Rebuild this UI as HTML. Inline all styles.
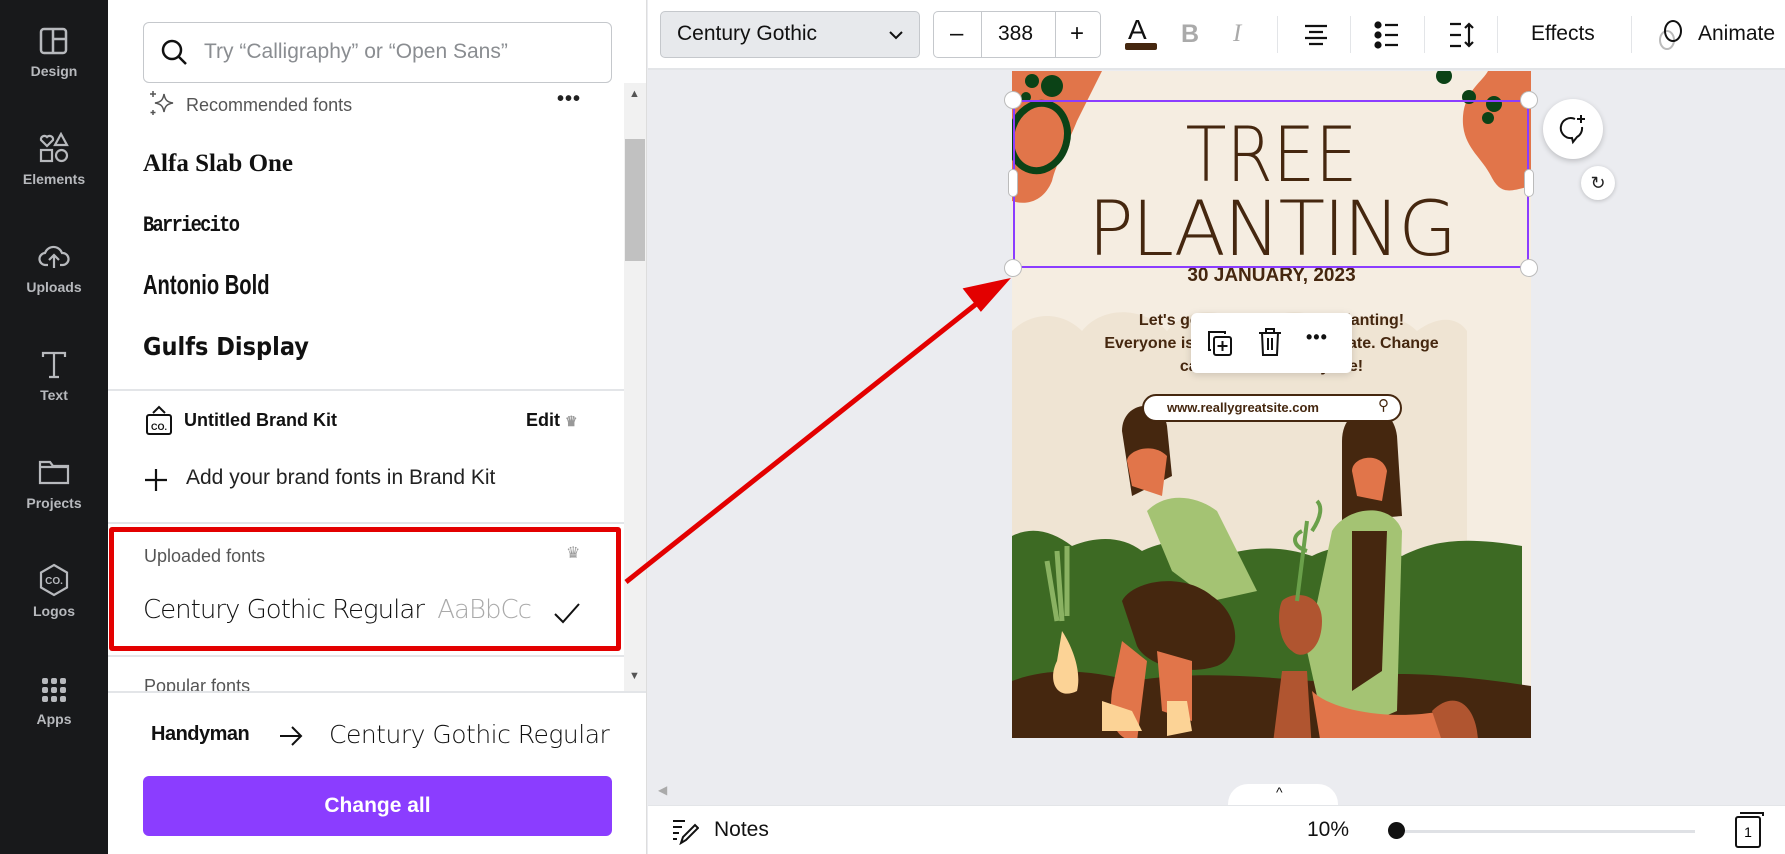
<!DOCTYPE html>
<html><head><meta charset="utf-8"><style>
*{box-sizing:border-box;margin:0;padding:0}
body{width:1785px;height:854px;overflow:hidden;font-family:"Liberation Sans",sans-serif;background:#ebecf0;position:relative}
.abs{position:absolute}
#side{left:0;top:0;width:108px;height:854px;background:#18191b}
.si{position:absolute;left:0;width:108px;text-align:center;color:#b7b9bd;font-size:14px;font-weight:bold}
#panel{left:108px;top:0;width:539px;height:854px;background:#fff;border-right:1px solid #ddd}
.t{position:absolute;white-space:nowrap}
.div{position:absolute;left:0;width:516px;height:2px;background:#e3e5e8}
</style></head><body>
<div class="abs" id="side">
 <svg class="abs" style="left:38px;top:27px" width="32" height="28" viewBox="0 0 32 28" fill="none" stroke="#b7b9bd" stroke-width="2.5"><rect x="3" y="2" width="25" height="24" rx="3"/><path d="M15 2v24M15 12h13"/></svg>
 <div class="si" style="top:63px">Design</div>
 <svg class="abs" style="left:38px;top:132px" width="32" height="32" viewBox="0 0 32 32" fill="none" stroke="#b7b9bd" stroke-width="2.2"><path d="M9 14l-6-6a3.5 3.5 0 016-3 3.5 3.5 0 016 3z"/><path d="M23 2l6 11h-12z"/><rect x="3" y="18" width="11" height="11"/><circle cx="23.5" cy="23.5" r="5.5"/></svg>
 <div class="si" style="top:171px">Elements</div>
 <svg class="abs" style="left:38px;top:240px" width="32" height="32" viewBox="0 0 32 32" fill="none" stroke="#b7b9bd" stroke-width="2.2"><path d="M10 25H8a6 6 0 01-1-12 9 9 0 0117 0 6 6 0 011 12h-3"/><path d="M16 28V15M11 20l5-5 5 5"/></svg>
 <div class="si" style="top:279px">Uploads</div>
 <svg class="abs" style="left:40px;top:350px" width="28" height="30" viewBox="0 0 28 30" fill="none" stroke="#b7b9bd" stroke-width="2.2"><path d="M3 7V3h22v4M14 3v24M9 27h10"/></svg>
 <div class="si" style="top:387px">Text</div>
 <svg class="abs" style="left:37px;top:458px" width="34" height="28" viewBox="0 0 34 28" fill="none" stroke="#b7b9bd" stroke-width="2.2"><path d="M3 4h10l3 4h15v17H3z M3 9h28"/></svg>
 <div class="si" style="top:495px">Projects</div>
 <svg class="abs" style="left:38px;top:563px" width="32" height="34" viewBox="0 0 32 34" fill="none" stroke="#b7b9bd" stroke-width="2.2"><path d="M16 2l13 7.5v15L16 32 3 24.5v-15z"/><text x="16" y="21" font-size="10" text-anchor="middle" fill="#b7b9bd" stroke="none" font-weight="bold" font-family="Liberation Sans">CO.</text></svg>
 <div class="si" style="top:603px">Logos</div>
 <svg class="abs" style="left:40px;top:676px" width="28" height="28" viewBox="0 0 28 28" fill="#b7b9bd"><rect x="2" y="2" width="6" height="6" rx="2"/><rect x="11" y="2" width="6" height="6" rx="2"/><rect x="20" y="2" width="6" height="6" rx="2"/><rect x="2" y="11" width="6" height="6" rx="2"/><rect x="11" y="11" width="6" height="6" rx="2"/><rect x="20" y="11" width="6" height="6" rx="2"/><rect x="2" y="20" width="6" height="6" rx="2"/><rect x="11" y="20" width="6" height="6" rx="2"/><rect x="20" y="20" width="6" height="6" rx="2"/></svg>
 <div class="si" style="top:711px">Apps</div>
</div>

<div class="abs" id="panel">
 <div class="abs" style="left:35px;top:22px;width:469px;height:61px;border:1.5px solid #c5c8cc;border-radius:6px"></div>
 <svg class="abs" style="left:52px;top:38px" width="30" height="30" viewBox="0 0 30 30" fill="none" stroke="#111" stroke-width="2.5"><circle cx="12" cy="12" r="9"/><path d="M19 19l7 7"/></svg>
 <div class="t" style="left:96px;top:40px;font-size:21px;color:#8a8d91">Try “Calligraphy” or “Open Sans”</div>
 <svg class="abs" style="left:38px;top:88px" width="30" height="30" viewBox="0 0 30 30" fill="none" stroke="#555" stroke-width="1.5"><path d="M18 6c1 6 3 8 9 9-6 1-8 3-9 9-1-6-3-8-9-9 6-1 8-3 9-9z"/><path d="M7 3v6M4 6h6M7 22v5M4.5 24.5h5"/></svg>
 <div class="t" style="left:78px;top:95px;font-size:18px;color:#555">Recommended fonts</div>
 <div class="t" style="left:449px;top:88px;font-size:20px;color:#222;font-weight:bold;letter-spacing:1px">•••</div>
 <div class="t" style="left:35px;top:150px;font-size:25px;font-weight:900;font-family:'Liberation Serif',serif;color:#111">Alfa Slab One</div>
 <div class="t" style="left:35px;top:213px;font-size:22px;color:#111;font-family:'Liberation Mono',monospace;letter-spacing:-2px;font-weight:bold;transform:scaleX(.85);transform-origin:left">Barriecito</div>
 <div class="t" style="left:35px;top:269px;font-size:28px;color:#111;font-weight:bold;transform:scaleX(.72);transform-origin:left">Antonio Bold</div>
 <div class="t" style="left:35px;top:332px;font-size:25px;color:#111;font-weight:900;font-family:'DejaVu Sans',sans-serif;transform:scaleX(.9);transform-origin:left">Gulfs Display</div>
 <div class="div" style="top:389px"></div>
 <svg class="abs" style="left:37px;top:404px" width="28" height="32" viewBox="0 0 28 32" fill="none" stroke="#111" stroke-width="2"><path d="M8 9l6-6 6 6"/><rect x="2" y="11" width="24" height="19" rx="2"/><text x="14" y="26" font-size="9" text-anchor="middle" fill="#111" stroke="none" font-weight="bold" font-family="Liberation Sans">CO.</text></svg>
 <div class="t" style="left:76px;top:410px;font-size:18px;font-weight:bold;color:#111">Untitled Brand Kit</div>
 <div class="t" style="left:418px;top:410px;font-size:18px;font-weight:bold;color:#111">Edit <span style="color:#999;font-size:14px">♛</span></div>
 <svg class="abs" style="left:36px;top:468px" width="24" height="24" viewBox="0 0 24 24" stroke="#111" stroke-width="2.2"><path d="M12 1v22M1 12h22"/></svg>
 <div class="t" style="left:78px;top:466px;font-size:21px;color:#222">Add your brand fonts in Brand Kit</div>
 <div class="div" style="top:522px"></div>
 <div class="t" style="left:36px;top:546px;font-size:18px;color:#555">Uploaded fonts</div>
 <div class="t" style="left:458px;top:543px;font-size:16px;color:#999">♛</div>
 <div class="t" style="left:35px;top:595px;font-size:26px;color:#111;font-family:'DejaVu Sans',sans-serif;letter-spacing:-1px;font-weight:300">Century Gothic Regular <span style="color:#aaa;margin-left:6px">AaBbCc</span></div>
 <svg class="abs" style="left:445px;top:601px" width="28" height="24" viewBox="0 0 28 24" fill="none" stroke="#111" stroke-width="2"><path d="M2 13l8 8L26 3"/></svg>
 <div class="abs" style="left:1px;top:527px;width:512px;height:124px;border:5.5px solid #e30000;border-radius:3px"></div>
 <div class="div" style="top:655px"></div>
 <div class="t" style="left:36px;top:676px;font-size:18px;color:#555;height:16px;overflow:hidden">Popular fonts</div>
 <div class="abs" style="left:516px;top:83px;width:22px;height:608px;background:#f1f1f1"></div>
 <div class="abs" style="left:517px;top:139px;width:20px;height:122px;background:#c1c1c1"></div>
 <div class="t" style="left:521px;top:88px;font-size:11px;color:#555">▲</div>
 <div class="t" style="left:521px;top:670px;font-size:11px;color:#555">▼</div>
 <div class="abs" style="left:0;top:691px;width:538px;height:2px;background:#e3e5e8"></div>
 <div class="t" style="left:43px;top:723px;font-size:20px;font-weight:bold;color:#111;letter-spacing:-0.5px">Handyman</div>
 <svg class="abs" style="left:170px;top:725px" width="26" height="22" viewBox="0 0 26 22" fill="none" stroke="#111" stroke-width="2"><path d="M2 11h21M14 2l9 9-9 9"/></svg>
 <div class="t" style="left:221px;top:720px;font-size:25px;color:#111;font-family:'DejaVu Sans',sans-serif;letter-spacing:-0.5px;font-weight:300">Century Gothic Regular</div>
 <div class="abs" style="left:35px;top:776px;width:469px;height:60px;background:#8b3dff;border-radius:6px;color:#fff;font-size:21px;font-weight:bold;text-align:center;line-height:60px">Change all</div>
</div>

<!-- toolbar -->
<div class="abs" style="left:648px;top:0;width:1137px;height:70px;background:#fff;border-bottom:2px solid #e3e5e8"></div>
<div class="abs" style="left:660px;top:11px;width:260px;height:47px;background:#e7e9ec;border:1.5px solid #c5c8cc;border-radius:5px"></div>
<div class="t" style="left:677px;top:22px;font-size:21px;color:#111">Century Gothic</div>
<svg class="abs" style="left:888px;top:29px" width="16" height="12" viewBox="0 0 16 12" fill="none" stroke="#111" stroke-width="2"><path d="M2 3l6 6 6-6"/></svg>
<div class="abs" style="left:933px;top:11px;width:168px;height:47px;border:1.5px solid #c5c8cc;border-radius:5px"></div>
<div class="abs" style="left:981px;top:12px;width:1px;height:45px;background:#c5c8cc"></div>
<div class="abs" style="left:1055px;top:12px;width:1px;height:45px;background:#c5c8cc"></div>
<div class="t" style="left:950px;top:20px;font-size:24px;color:#111">–</div>
<div class="t" style="left:998px;top:22px;font-size:21px;color:#111">388</div>
<div class="t" style="left:1070px;top:20px;font-size:24px;color:#111">+</div>
<div class="t" style="left:1128px;top:14px;font-size:28px;color:#111">A</div>
<div class="abs" style="left:1125px;top:43px;width:32px;height:7px;background:#45270f;border-radius:2px"></div>
<div class="t" style="left:1181px;top:20px;font-size:25px;color:#aaa;font-weight:bold">B</div>
<div class="t" style="left:1233px;top:20px;font-size:25px;color:#aaa;font-style:italic;font-family:'Liberation Serif',serif">I</div>
<div class="abs" style="left:1277px;top:16px;width:1px;height:37px;background:#e3e5e8"></div>
<svg class="abs" style="left:1303px;top:23px" width="26" height="24" viewBox="0 0 26 24" stroke="#111" stroke-width="2.2"><path d="M2 3h22M6 9h14M2 15h22M6 21h14"/></svg>
<div class="abs" style="left:1350px;top:16px;width:1px;height:37px;background:#e3e5e8"></div>
<svg class="abs" style="left:1374px;top:21px" width="26" height="28" viewBox="0 0 26 28" fill="#111" stroke="#111" stroke-width="2.2"><circle cx="4" cy="4" r="2.5"/><circle cx="4" cy="14" r="2.5"/><circle cx="4" cy="24" r="2.5"/><path d="M11 4h13M11 14h13M11 24h13"/></svg>
<div class="abs" style="left:1424px;top:16px;width:1px;height:37px;background:#e3e5e8"></div>
<svg class="abs" style="left:1448px;top:21px" width="28" height="28" viewBox="0 0 28 28" fill="none" stroke="#111" stroke-width="2.2"><path d="M2 3h11M2 14h11M2 25h11M21 3v22M17 7l4-4 4 4M17 21l4 4 4-4"/></svg>
<div class="abs" style="left:1497px;top:16px;width:1px;height:37px;background:#e3e5e8"></div>
<div class="t" style="left:1531px;top:22px;font-size:21px;color:#111">Effects</div>
<div class="abs" style="left:1631px;top:16px;width:1px;height:37px;background:#e3e5e8"></div>
<svg class="abs" style="left:1656px;top:18px" width="28" height="34" viewBox="0 0 28 34" fill="none" stroke-width="2"><ellipse cx="11" cy="22" rx="7" ry="9" stroke="#bbb"/><ellipse cx="17" cy="13" rx="8" ry="10" stroke="#111"/></svg>
<div class="t" style="left:1698px;top:22px;font-size:21px;color:#111">Animate</div>

<!-- page -->
<div class="abs" style="left:1012px;top:71px;width:519px;height:667px;background:#f5ede1;overflow:hidden">
 <svg width="519" height="667" viewBox="0 0 519 667">
  <rect width="519" height="667" fill="#f5ede1"/>
  <path d="M0 0h90l-25 50c-10 25-20 40-25 60-8 20-25 25-40 20z" fill="#e1754a"/>
  <circle cx="20" cy="10" r="7" fill="#0b4216"/><circle cx="40" cy="15" r="11" fill="#0b4216"/><circle cx="14" cy="26" r="5" fill="#0b4216"/>
  <ellipse cx="27" cy="66" rx="28" ry="34" fill="none" stroke="#0b4216" stroke-width="7" transform="rotate(15 27 66)"/>
  <path d="M519 0v115c-20 5-30 10-40-10-10-20-30-30-28-60 2-25 20-35 25-45z" fill="#e1754a"/>
  <circle cx="457" cy="26" r="7" fill="#0b4216"/><circle cx="482" cy="33" r="8" fill="#0b4216"/><circle cx="476" cy="47" r="6" fill="#0b4216"/><circle cx="432" cy="5" r="8" fill="#0b4216"/>
  <path d="M0 260c20-20 50-20 70 0 20-25 60-25 85 0 20-25 60-25 85 0 25-25 60-25 85 0 25-20 60-20 80 0 20-15 40-15 50 0v407H0z" fill="#efe4d3"/>
  <g transform="translate(0,95)">
  <path d="M0 370c20-10 40-5 60 10 25-10 50-10 70 5 30-15 60-10 80 5 30-10 60-10 90 0 30-15 60-10 90 0 30-15 60-20 120-10v297H0z" fill="#3d6a23"/>
  </g>
  <path d="M0 610c40-15 80-10 120 0 60-10 120-5 180 0 60-10 120-10 219 5v52H0z" fill="#45270f"/>
  <g transform="translate(0,100)">
  <path d="M110 260c0-30 40-35 45-5l5 50-40 20z" fill="#45270f"/>
  <path d="M115 290c0-10 25-20 40-5l-5 40-30-10z" fill="#e1754a"/>
  <path d="M135 340c20-20 50-15 70 0l40 80-45 10-40-30z" fill="#a4c373"/>
  <path d="M110 430c10-20 60-30 90-5 30 20 30 60 5 70-30 10-70 0-80-20z" fill="#45270f"/>
  <path d="M110 470l-10 50c-5 40 10 50 25 50l10-80z" fill="#e1754a"/>
  <path d="M145 480l5 60 30 10 0-60z" fill="#e1754a"/>
  <path d="M90 530l30 10 10 20-40 0z M155 530h20l5 30-25 5z" fill="#fcd396"/>
  <path d="M50 460c10 15 20 40 15 60-20 10-30-10-20-30z" fill="#fcd396"/>
  <path d="M45 380l5 70M35 390l10 60M55 375l0 70" stroke="#8ab262" stroke-width="5"/>
  <path d="M330 270c0-40 50-45 55-5l5 80-60 5z" fill="#45270f"/>
  <path d="M340 300c0-15 30-20 35 0l-5 30-25-5z" fill="#e1754a"/>
  <path d="M320 360c15-25 60-30 70 0l-5 180-70 30-20-90z" fill="#a4c373"/>
  <path d="M340 360l35 0-5 140-30 20z" fill="#45270f"/>
  <path d="M270 430c10-10 40-10 40 20 0 30-20 40-30 30-15-10-15-40-10-50z" fill="#b05530"/>
  <path d="M270 500h25l5 80h-40z" fill="#b05530"/>
  <path d="M300 520c20 20 80 30 130 20l20 40c-40 20-120 20-140 0z" fill="#e1754a"/>
  <path d="M420 540c20-20 40-10 45 20l5 40-30 0z" fill="#b05530"/>
  <path d="M285 430l10-80M295 380c-15-5-15-15-5-20M300 360c10-15 10-25 5-30" stroke="#6aa04a" stroke-width="4" fill="none"/>
  </g>
 </svg>
 <div class="t" style="left:0;width:519px;text-align:center;top:44px;font-size:76px;line-height:80px;color:#45270f;font-family:'DejaVu Sans',sans-serif;font-weight:200;transform:scaleX(.88)">TREE</div>
 <div class="t" style="left:0;width:519px;text-align:center;top:118px;font-size:76px;line-height:80px;color:#45270f;font-family:'DejaVu Sans',sans-serif;font-weight:200;letter-spacing:-2px">PLANTING</div>
 <div class="t" style="left:0;width:519px;text-align:center;top:194px;font-size:19px;font-weight:bold;color:#45270f">30 JANUARY, 2023</div>
 <div class="t" style="left:0;width:519px;text-align:center;top:238px;font-size:16px;line-height:23px;font-weight:bold;color:#45270f">Let's get together for tree planting!<br>Everyone is welcome to participate. Change<br>can start with everyone!</div>
 <div class="abs" style="left:130px;top:323px;width:260px;height:28px;border:2px solid #45270f;border-radius:14px;background:#fff"></div>
 <div class="t" style="left:155px;top:329px;font-size:13px;font-weight:bold;color:#45270f">www.reallygreatsite.com</div>
 <div class="t" style="left:366px;top:325px;font-size:15px;color:#45270f">⚲</div>
</div>
<!-- selection -->
<div class="abs" style="left:1013px;top:100px;width:516px;height:168px;border:2.5px solid #8b3dff"></div>
<div class="abs" style="left:1004px;top:91px;width:18px;height:18px;border-radius:50%;background:#fff;border:1px solid #bbb"></div>
<div class="abs" style="left:1520px;top:91px;width:18px;height:18px;border-radius:50%;background:#fff;border:1px solid #bbb"></div>
<div class="abs" style="left:1004px;top:259px;width:18px;height:18px;border-radius:50%;background:#fff;border:1px solid #bbb"></div>
<div class="abs" style="left:1520px;top:259px;width:18px;height:18px;border-radius:50%;background:#fff;border:1px solid #bbb"></div>
<div class="abs" style="left:1008px;top:169px;width:10px;height:28px;border-radius:5px;background:#fff;border:1px solid #bbb"></div>
<div class="abs" style="left:1524px;top:169px;width:10px;height:28px;border-radius:5px;background:#fff;border:1px solid #bbb"></div>
<!-- float toolbar -->
<div class="abs" style="left:1191px;top:313px;width:161px;height:60px;background:#fff;border-radius:6px;box-shadow:0 2px 8px rgba(0,0,0,.15)"></div>
<svg class="abs" style="left:1205px;top:328px" width="30" height="30" viewBox="0 0 30 30" fill="none" stroke="#111" stroke-width="2"><path d="M6 22H4V4h16v2"/><rect x="9" y="9" width="17" height="18" rx="2"/><path d="M17.5 13v10M12.5 18h10"/></svg>
<svg class="abs" style="left:1256px;top:326px" width="28" height="32" viewBox="0 0 28 32" fill="none" stroke="#111" stroke-width="2"><path d="M3 7h22M10 7V3h8v4M6 7l1 22h14l1-22M12 12v12M16 12v12"/></svg>
<div class="t" style="left:1306px;top:327px;font-size:18px;font-weight:bold;color:#111;letter-spacing:1px">•••</div>
<!-- side buttons -->
<div class="abs" style="left:1543px;top:99px;width:60px;height:60px;border-radius:50%;background:#fff;box-shadow:0 2px 6px rgba(0,0,0,.2)"></div>
<svg class="abs" style="left:1558px;top:113px" width="32" height="32" viewBox="0 0 32 32" fill="none" stroke="#111" stroke-width="2"><path d="M17 6a10 10 0 10-3 19l1 4 4-5a10 10 0 005-10"/><path d="M23 2v8M19 6h8"/></svg>
<div class="abs" style="left:1581px;top:166px;width:34px;height:34px;border-radius:50%;background:#fff;box-shadow:0 1px 4px rgba(0,0,0,.2);text-align:center;line-height:34px;font-size:18px;color:#222">↻</div>
<!-- arrow -->
<svg class="abs" style="left:620px;top:275px" width="400" height="320" viewBox="620 275 400 320"><path d="M626 582L985 297" stroke="#e30000" stroke-width="5"/><path d="M1004 282l-37 8 14 18z" fill="#e30000" stroke="#e30000" stroke-width="5"/></svg>
<!-- bottom -->
<div class="abs" style="left:658px;top:783px;font-size:12px;color:#aaa">◀</div>
<div class="abs" style="left:1228px;top:784px;width:110px;height:24px;background:#fff;border-radius:20px 20px 0 0"></div>
<div class="t" style="left:1276px;top:784px;font-size:14px;color:#111">^</div>
<div class="abs" style="left:648px;top:805px;width:1137px;height:49px;background:#fff;border-top:1px solid #e3e5e8"></div>
<svg class="abs" style="left:671px;top:817px" width="28" height="28" viewBox="0 0 28 28" fill="none" stroke="#111" stroke-width="2"><path d="M2 4h12M2 10h9M2 16h6M2 22h4M10 26l2-6 12-12 3 3-12 12z"/></svg>
<div class="t" style="left:714px;top:818px;font-size:21px;color:#111">Notes</div>
<div class="t" style="left:1307px;top:818px;font-size:21px;color:#111">10%</div>
<div class="abs" style="left:1405px;top:830px;width:290px;height:3px;background:#dfe1e5"></div>
<div class="abs" style="left:1388px;top:822px;width:17px;height:17px;border-radius:50%;background:#111"></div>
<div class="abs" style="left:1735px;top:816px;width:26px;height:32px;border:2px solid #111;border-radius:3px;background:#fff;font-size:14px;text-align:center;line-height:28px">1</div>
<div class="abs" style="left:1740px;top:812px;width:24px;height:4px;border-top:2px solid #111;border-right:2px solid #111"></div>
</body></html>
